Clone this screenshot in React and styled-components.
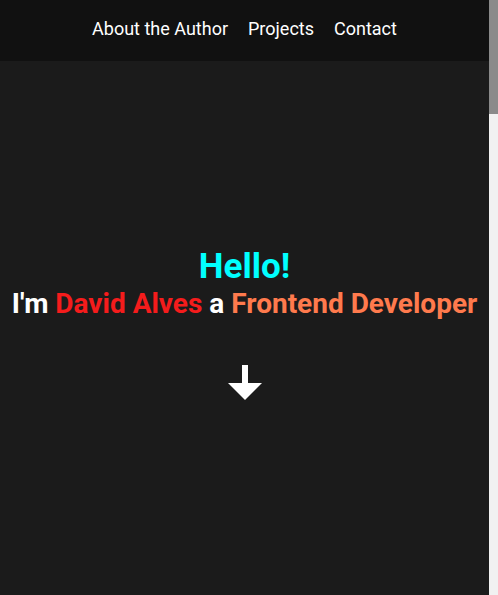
import React from "react";
import styled, { createGlobalStyle } from "styled-components";

const GlobalStyle = createGlobalStyle`
  html, body {
    margin: 0;
    padding: 0;
    height: 100%;
    overflow: hidden;
    background-color: #1b1b1b;
    font-family: Roboto, "Liberation Sans", sans-serif;
  }
  #root {
    height: 100%;
  }
`;

const Page = styled.div`
  height: 100vh;
  display: flex;
`;

const Content = styled.main`
  flex: 1;
  overflow: hidden;
`;

// scroll rail like the browser draws it, page is ~5x the viewport
const ScrollRail = styled.div`
  width: 9px;
  flex-shrink: 0;
  background: #f1f1f1;
`;

const ScrollThumb = styled.div`
  height: ${(p) => p.height}px;
  background: #8a8a8a;
`;

const Nav = styled.nav`
  height: 61px;
  background-color: #111111;
  display: flex;
  align-items: center;
  justify-content: center;
  gap: 20px;
  padding-bottom: 4px;
  box-sizing: border-box;
`;

const NavLink = styled.a`
  color: #ffffff;
  font-size: 18px;
  text-decoration: none;
  cursor: pointer;
`;

const Hero = styled.section`
  height: 534px;
  display: flex;
  flex-direction: column;
  align-items: center;
  justify-content: center;
  text-align: center;
  padding-bottom: 10px;
  box-sizing: border-box;
`;

const Hello = styled.h1`
  margin: 0;
  color: #00ffff;
  font-size: 35px;
  font-weight: 700;
  line-height: 40px;
`;

const Intro = styled.h2`
  margin: 0;
  color: #ffffff;
  font-size: 28px;
  font-weight: 700;
  line-height: 34px;
  white-space: nowrap;
`;

const Accent = styled.span`
  color: ${(p) => p.color};
`;

const Arrow = styled.div`
  margin-top: 44px;
  display: flex;
`;

const Section = styled.section`
  height: ${(p) => p.height}px;
`;

export default function App() {
  return (
    <Page>
      <GlobalStyle />
      <Content>
        <Nav>
          <NavLink>About the Author</NavLink>
          <NavLink>Projects</NavLink>
          <NavLink>Contact</NavLink>
        </Nav>
        <Hero>
          <Hello>Hello!</Hello>
          <Intro>
            I'm <Accent color="#f51c1c">David Alves</Accent> a{" "}
            <Accent color="#ff7a4d">Frontend Developer</Accent>
          </Intro>
          <Arrow>
            <svg width="34" height="35" viewBox="0 0 34 35">
              <rect x="14" y="0" width="6" height="19" fill="#ffffff" />
              <polygon points="0,18 34,18 17,35" fill="#ffffff" />
            </svg>
          </Arrow>
        </Hero>
        <Section height={2500} />
      </Content>
      <ScrollRail>
        <ScrollThumb height={114} />
      </ScrollRail>
    </Page>
  );
}
